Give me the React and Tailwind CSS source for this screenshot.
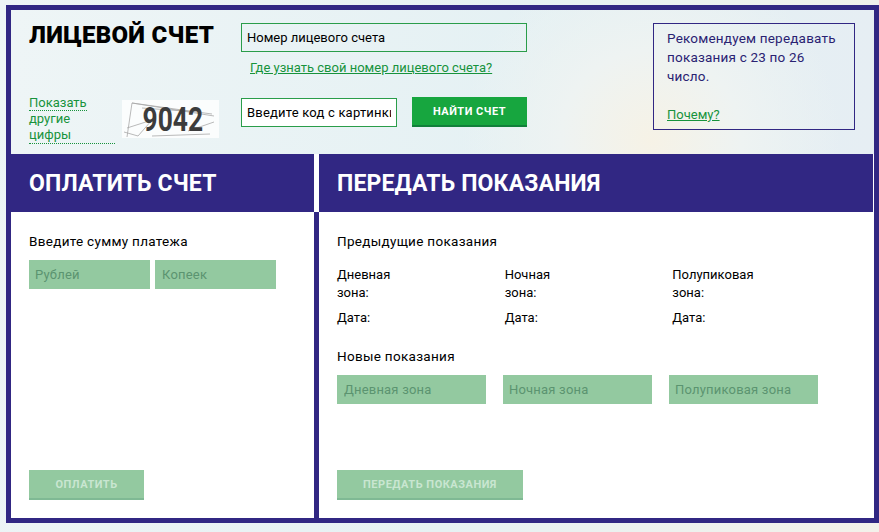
import React from 'react'

const DARK = 'border-[#312783]'
const GREEN = 'text-[#17933c]'

const Field = ({ placeholder, className }) => (
  <input
    disabled
    placeholder={placeholder}
    className={`h-[29px] bg-[#93c9a0] text-[13px] tracking-[0.2px] outline-none placeholder:text-[#5b9470] ${className}`}
  />
)

const PaleButton = ({ children, className }) => (
  <button className={`mt-auto mb-[18px] h-[30px] border-b-2 border-[#7fb994] bg-[#93c9a0] pt-[3px] text-[11px] font-bold tracking-[0.5px] text-[#c9e6d1] ${className}`}>
    {children}
  </button>
)

const Captcha = () => (
  <div className="relative mt-[6px] flex h-[38px] w-[97px] items-center justify-center bg-white/80">
    <svg className="absolute inset-0" width="97" height="38" viewBox="0 0 97 38" fill="none" stroke="#a8a8a8" strokeWidth="0.8">
      <path d="M5 37 L10 3 L92 16" />
      <path d="M10 3 L60 10 L90 14" />
      <path d="M5 28 L30 20 L16 36 L2 32" />
      <path d="M30 36 L88 34" />
      <path d="M66 31 L92 22" />
      <path d="M20 8 L76 12" />
    </svg>
    <span className="relative ml-[5px] scale-x-[0.8] font-['Roboto',sans-serif] text-[33px] leading-none font-bold text-[#3c3c3c]">9042</span>
  </div>
)

const Zone = ({ name }) => (
  <div className="flex-1">
    <p className="leading-[18px]">{name}<br />зона:</p>
    <p className="mt-[7px] leading-[18px]">Дата:</p>
  </div>
)

const App = () => {
  return (
    <div className="h-[532px] w-[879px] overflow-hidden bg-[linear-gradient(100deg,#eef5f6_0%,#e6f1f3_55%,#f3f1ea_100%)] pt-[5px] pl-[6px] font-['Roboto',sans-serif] text-[13px] text-black">
      <div className={`flex h-[518px] w-[873px] flex-col border-[5px] ${DARK}`}>

        {/* верхняя панель */}
        <div className="flex h-[144px] bg-[radial-gradient(circle_at_640px_130px,#f6f2e6_0,#eef3f2_90px,transparent_190px),linear-gradient(90deg,#eef5f6_0%,#e3f0f3_70%,#e6eef3_100%)] pt-[13px] pl-[18px]">
          <div className="flex w-[212px] flex-col">
            <h1 className="text-[24px] leading-[24px] font-black tracking-[0.3px] text-black">ЛИЦЕВОЙ СЧЕТ</h1>
            <div className="mt-[47px] flex items-start">
              <a className={`w-[93px] pt-[1px] text-[13px] leading-[16px] ${GREEN}`}>
                <span className="border-b border-dotted border-[#17933c]">Показать</span><br />
                другие<br />
                <span className="inline-block w-[86px] border-b border-dotted border-[#17933c]">цифры</span>
              </a>
              <Captcha />
            </div>
          </div>

          <div className="flex w-[286px] flex-col">
            <input
              placeholder="Номер лицевого счета"
              className="h-[29px] border border-[#2a9d4a] px-[5px] text-[13px] outline-none placeholder:text-black"
            />
            <a className={`mt-[8px] ml-[9px] text-[13px] leading-[16px] ${GREEN} underline`}>Где узнать свой номер лицевого счета?</a>
            <div className="mt-[21px] flex items-start justify-between">
              <input
                placeholder="Введите код с картинки"
                className="mt-[1px] h-[29px] w-[156px] border border-[#2a9d4a] bg-white px-[5px] text-[13px] tracking-[0.2px] outline-none placeholder:text-black"
              />
              <button className="h-[30px] w-[115px] border-b-2 border-[#11803a] bg-[#17a63f] pt-[2px] text-[11px] font-bold tracking-[0.5px] text-white">НАЙТИ СЧЕТ</button>
            </div>
          </div>

          <div className={`ml-[126px] h-[107px] w-[202px] border ${DARK} px-[13px] pt-[5px] text-[13.5px] leading-[19px] tracking-[0.2px] text-[#2a2272]`}>
            <p>Рекомендуем передавать показания с 23 по 26 число.</p>
            <a className={`mt-[19px] block text-[13px] tracking-normal ${GREEN} underline`}>Почему?</a>
          </div>
        </div>

        {/* заголовки */}
        <div className="flex h-[58px] bg-white text-[23px] font-bold tracking-[0.15px] text-white">
          <div className="flex w-[303px] items-center bg-[#312783] pt-[3px] pl-[18px]">ОПЛАТИТЬ СЧЕТ</div>
          <div className="mr-[1px] ml-[5px] flex flex-1 items-center bg-[#312783] pt-[3px] pl-[18px]">ПЕРЕДАТЬ ПОКАЗАНИЯ</div>
        </div>

        {/* формы */}
        <div className="flex flex-1 bg-white">
          <div className={`flex w-[308px] flex-col border-r-[5px] ${DARK} pt-[21px] pl-[18px]`}>
            <p className="text-[13.5px] leading-[16px] tracking-[0.3px]">Введите сумму платежа</p>
            <div className="mt-[11px] flex gap-[5px]">
              <Field placeholder="Рублей" className="w-[121px] px-[6px]" />
              <Field placeholder="Копеек" className="w-[121px] px-[7px]" />
            </div>
            <PaleButton className="w-[115px]">ОПЛАТИТЬ</PaleButton>
          </div>

          <div className="flex flex-1 flex-col pt-[21px] pl-[18px]">
            <p className="text-[13.5px] leading-[16px] tracking-[0.3px]">Предыдущие показания</p>
            <div className="mt-[17px] flex w-[503px]">
              <Zone name="Дневная" />
              <Zone name="Ночная" />
              <Zone name="Полупиковая" />
            </div>
            <p className="mt-[21px] text-[13.5px] leading-[16px] tracking-[0.3px]">Новые показания</p>
            <div className="mt-[11px] flex gap-[17px]">
              <Field placeholder="Дневная зона" className="w-[149px] px-[7px]" />
              <Field placeholder="Ночная зона" className="w-[149px] px-[6px]" />
              <Field placeholder="Полупиковая зона" className="w-[149px] px-[6px]" />
            </div>
            <PaleButton className="w-[186px]">ПЕРЕДАТЬ ПОКАЗАНИЯ</PaleButton>
          </div>
        </div>
      </div>
    </div>
  )
}

export default App
